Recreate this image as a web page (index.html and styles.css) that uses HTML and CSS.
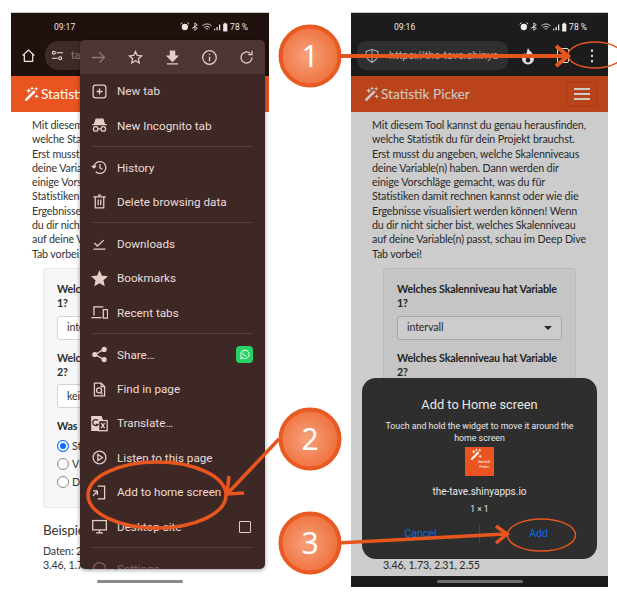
FILE: index.html
```
<!DOCTYPE html>
<html lang="de">
<head>
<meta charset="utf-8">
<title>Statistik Picker</title>
<link rel="stylesheet" href="styles.css">
</head>
<body>
<svg class="defs" width="0" height="0" aria-hidden="true">
  <defs>
    <radialGradient id="disc" cx="0.45" cy="0.5" r="0.6">
      <stop offset="0" stop-color="#f6a27c"/>
      <stop offset="1" stop-color="#ee6a35"/>
    </radialGradient>
    <g id="wand" fill="currentColor" stroke="none">
      <path d="M1.500 13.500 10.500 4.500l2 2-9 9a1.400 1.400 0 0 1-2-2Z"/>
      <path d="M5 2 5.800 4.200 8 5 5.800 5.800 5 8 4.200 5.800 2 5 4.200 4.200ZM13 .5 13.600 2.400 15.500 3 13.600 3.600 13 5.500 12.400 3.600 10.500 3 12.400 2.400ZM13.500 8.500 14.200 10.300 16 11 14.200 11.700 13.500 13.500 12.800 11.700 11 11 12.800 10.300ZM8.500 .5 9.100 1.900 10.500 2.500 9.100 3.100 8.500 4.500 7.900 3.100 6.500 2.500 7.900 1.900Z"/>
    </g>
    <g id="status" fill="currentColor" stroke="none">
      <circle cx="6" cy="6" r="3.800"/><path d="M1 2.500 3 .8M11 2.500 9 .8" stroke="currentColor" stroke-width="1.200"/>
      <path d="M18 1v9l3-2.500-3-2-3 2 3-2 3-2Z" fill="none" stroke="currentColor"/>
      <path d="M27 4.500a8 8 0 0 1 11 0M29 6.500a5.500 5.500 0 0 1 7 0M31 8.500a2.500 2.500 0 0 1 3 0" fill="none" stroke="currentColor"/>
      <path d="M41 8h1.500v2H41ZM44 6h1.500v4H44ZM47 3h1.500v7H47Z"/>
      <path d="M52 2h1.500V1h2v1H57v9.500h-5Z"/>
    </g>
  </defs>
</svg>

<main class="stage">

  <section class="phone phone-menu">
    <header class="chrome">
      <div class="status"><span class="time">09:17</span><span class="status-right"><svg class="status-icons" viewBox="0 0 58 12"><use href="#status"/></svg><span>78 %</span></span></div>
      <div class="toolbar toolbar-menu">
        <svg class="home" viewBox="0 0 18 18" fill="none" stroke="currentColor" stroke-width="1.500"><path d="M2 9 9 2.500 16 9M4 8v8h10V8"/></svg>
        <div class="pill pill-short">
          <svg class="tune" viewBox="0 0 14 12" fill="none" stroke="currentColor" stroke-width="1.200"><circle cx="3" cy="3" r="1.600"/><path d="M6 3h7M1 9h6"/><circle cx="10" cy="9" r="1.600"/></svg>
          <span class="url">tav</span>
        </div>
      </div>
    </header>
    <nav class="nav nav-menu">
      <svg class="wand" viewBox="0 0 16 16"><use href="#wand"/></svg><span class="brand">Statistik Picker</span>
    </nav>
    <div class="content">
      <p class="intro">Mit diesem Tool kannst du genau herausfinden, welche Statistik du für dein Projekt brauchst. Erst musst du angeben, welche Skalenniveaus deine Variable(n) haben. Dann werden dir einige Vorschläge gemacht, was du für Statistiken damit rechnen kannst oder wie die Ergebnisse visualisiert werden können! Wenn du dir nicht sicher bist, welches Skalenniveau auf deine Variable(n) passt, schau im Deep Dive Tab vorbei!</p>
      <div class="card">
        <div class="label">Welches Skalenniveau hat Variable 1?</div>
        <div class="select"><span>intervall</span><i class="caret"></i></div>
        <div class="label">Welches Skalenniveau hat Variable 2?</div>
        <div class="select"><span>keine</span><i class="caret"></i></div>
        <div class="label label-was">Was möchtest du sehen?</div>
        <div class="radio on"><i></i><span>Statistik</span></div>
        <div class="radio"><i></i><span>Visualisierung</span></div>
        <div class="radio"><i></i><span>Daten</span></div>
      </div>
      <h2 class="example">Beispieldaten</h2>
      <p class="data">Daten: 2.31, 2.55, 1.73,<br>3.46, 1.73, 2.31, 2.55</p>
    </div>
    <div class="home-bar home-bar-light"><i></i></div>

    <div class="menu">
      <div class="menu-tools">
        <svg viewBox="0 0 20 20" class="dim"><path d="M2 10h15M11 4l6 6-6 6"/></svg>
        <svg viewBox="0 0 20 20"><path d="M10 3l2.100 4.600 5 .5-3.700 3.400 1 4.900-4.400-2.500-4.400 2.500 1-4.900L2.900 8.100l5-.5Z"/></svg>
        <svg viewBox="0 0 20 20"><path class="solid" d="M7.500 2.500h5v6H16l-6 6-6-6h3.500Z"/><path d="M3.500 17.500h13"/></svg>
        <svg viewBox="0 0 20 20"><circle cx="10" cy="10" r="8"/><path d="M10 9v5.500M10 5.500v1.500"/></svg>
        <svg viewBox="0 0 20 20"><path d="M16.500 10a6.500 6.500 0 1 1-2-4.700M16.500 2v4.500H12"/></svg>
      </div>
      <ul class="menu-list">
        <li><svg viewBox="0 0 20 20"><rect x="2.500" y="2.500" width="15" height="15" rx="3"/><path d="M10 6.500v7M6.500 10h7"/></svg>New tab</li>
        <li><svg viewBox="0 0 20 20"><path class="solid" d="M6 2.500h8l1.500 5h-11Z"/><path d="M1.500 9h17"/><circle cx="5.500" cy="14" r="2.700"/><circle cx="14.500" cy="14" r="2.700"/><path d="M8.200 14h3.600"/></svg>New Incognito tab</li>
        <li class="sep"></li>
        <li><svg viewBox="0 0 20 20"><path d="M3.500 10a7 7 0 1 1 2.100 5M1 8l2.500 2.500L6 8M10.500 6v4.500l3 1.500"/></svg>History</li>
        <li><svg viewBox="0 0 20 20"><path d="M2.500 4.500h15M5 4.500h10v13H5ZM8 2.500h4M8.500 7.500v7M11.500 7.500v7"/></svg>Delete browsing data</li>
        <li class="sep"></li>
        <li><svg viewBox="0 0 20 20"><path d="M4 9.500l3.500 3.500L15 6M3 16.500h14"/></svg>Downloads</li>
        <li><svg viewBox="0 0 20 20"><path class="solid" d="M10 2l2.400 5.300 5.800.6-4.300 3.900 1.200 5.700-5.100-2.900-5.100 2.900 1.200-5.700L1.800 7.900l5.800-.6Z"/></svg>Bookmarks</li>
        <li><svg viewBox="0 0 20 20" class="wide"><path d="M3.500 13.500V3.500h11M.500 16h12M14.500 6.500h5v10h-5Z"/></svg>Recent tabs</li>
        <li class="sep"></li>
        <li><svg viewBox="0 0 20 20"><path d="M15 4 5 10l10 6"/><circle class="solid" cx="15.500" cy="4" r="2.300"/><circle class="solid" cx="4.500" cy="10" r="2.300"/><circle class="solid" cx="15.500" cy="16" r="2.300"/></svg>Share…<span class="whatsapp"><svg viewBox="0 0 20 20"><path d="M4 16.500l1-3.500a6.500 6.500 0 1 1 2.500 2.500ZM7.500 7c0 3 2.500 5.500 5.500 5.500"/></svg></span></li>
        <li><svg viewBox="0 0 20 20"><path d="M4 2.500h8l4 4v11H4ZM12 2.500v4h4"/><circle cx="9.500" cy="11" r="3"/><path d="M11.500 13.500l2 2"/></svg>Find in page</li>
        <li><svg viewBox="0 0 20 20"><path class="solid" d="M1 2h11l5 16H1Z"/><rect x="9" y="6.500" width="10" height="12" fill="#3e2826"/><path d="M12 9.500l4 6M16 9.500l-4 6"/><path class="translate-mark" d="M8 6.500A3.500 3.500 0 1 0 8.500 11H5.500"/></svg>Translate…</li>
        <li><svg viewBox="0 0 20 20"><circle cx="10" cy="10" r="7.500"/><path d="M8 6.500l5.500 3.500L8 13.500Z"/></svg>Listen to this page</li>
        <li><svg viewBox="0 0 20 20"><path d="M8 2.500h8v15H8M2.500 8h5M7.500 8v5M7.500 8l-5 6"/></svg>Add to home screen</li>
        <li><svg viewBox="0 0 20 20"><rect x="2" y="3" width="16" height="11"/><path d="M10 14v3M6 17.500h8"/></svg>Desktop site<span class="check"></span></li>
        <li class="sep"></li>
        <li class="faded"><svg viewBox="0 0 20 20"><circle cx="10" cy="10" r="7"/></svg>Settings</li>
      </ul>
    </div>
  </section>

  <section class="phone phone-dialog">
    <header class="chrome chrome-grey">
      <div class="status"><span class="time">09:16</span><span class="status-right"><svg class="status-icons" viewBox="0 0 58 12"><use href="#status"/></svg><span>78 %</span></span></div>
      <div class="toolbar">
        <div class="pill pill-long">
          <svg class="shield" viewBox="0 0 16 16" fill="none" stroke="currentColor" stroke-width="1.100"><path d="M8 1.500 14 3.500c0 5-1.500 9-6 11-4.500-2-6-6-6-11ZM8 1.500v13M2.500 7.500h11"/></svg>
          <span class="url">https://the-tave.shinya</span>
        </div>
        <svg class="flame" viewBox="0 0 14 18"><path d="M7 1c1 3 6 5 6 10.500a6 6 0 0 1-12 0c0-2.500 1-4 2.500-5.500.3 1.500.8 2 1.300 2C6 6 6 3 7 1Z" fill="currentColor"/><path d="M7 9c1 1.500 2.300 2.500 2.300 4.300a2.300 2.300 0 0 1-4.600 0C4.700 11.500 6 10.500 7 9Z" fill="#1c1c1c"/></svg>
        <span class="tabs"></span>
        <svg class="dots" viewBox="0 0 4 16"><circle cx="2" cy="2" r="1.300"/><circle cx="2" cy="8" r="1.300"/><circle cx="2" cy="14" r="1.300"/></svg>
      </div>
    </header>
    <nav class="nav">
      <svg class="wand" viewBox="0 0 16 16"><use href="#wand"/></svg><span class="brand">Statistik Picker</span>
      <span class="burger"><i></i><i></i><i></i></span>
    </nav>
    <div class="content">
      <p class="intro">Mit diesem Tool kannst du genau herausfinden, welche Statistik du für dein Projekt brauchst. Erst musst du angeben, welche Skalenniveaus deine Variable(n) haben. Dann werden dir einige Vorschläge gemacht, was du für Statistiken damit rechnen kannst oder wie die Ergebnisse visualisiert werden können! Wenn du dir nicht sicher bist, welches Skalenniveau auf deine Variable(n) passt, schau im Deep Dive Tab vorbei!</p>
      <div class="card">
        <div class="label">Welches Skalenniveau hat Variable 1?</div>
        <div class="select"><span>intervall</span><i class="caret"></i></div>
        <div class="label">Welches Skalenniveau hat Variable 2?</div>
        <div class="select"><span>keine</span><i class="caret"></i></div>
        <div class="label label-was">Was möchtest du sehen?</div>
        <div class="radio on"><i></i><span>Statistik</span></div>
        <div class="radio"><i></i><span>Visualisierung</span></div>
        <div class="radio"><i></i><span>Daten</span></div>
      </div>
      <h2 class="example">Beispieldaten</h2>
      <p class="data">Daten: 2.31, 2.55, 1.73,<br>3.46, 1.73, 2.31, 2.55</p>
    </div>
    <div class="home-bar"><i></i></div>
    <div class="scrim"></div>

    <div class="dialog">
      <h3 class="dialog-title">Add to Home screen</h3>
      <p class="dialog-hint">Touch and hold the widget to move it around the home screen</p>
      <div class="widget">
        <svg class="widget-wand" viewBox="0 0 16 16"><use href="#wand"/></svg>
        <span>Statistik<br>Picker</span>
      </div>
      <div class="dialog-domain">the-tave.shinyapps.io</div>
      <div class="dialog-size">1 × 1</div>
      <div class="dialog-actions"><span>Cancel</span><i class="divider"></i><span>Add</span></div>
    </div>
  </section>

  <svg class="notes" viewBox="0 0 617 596" width="617" height="596">
    <g class="note-lines">
      <ellipse cx="595" cy="55" rx="27" ry="13" class="thin"/>
      <path d="M338 56H566M556 46l12 10-12 10" class="bold"/>
      <ellipse cx="157" cy="495" rx="69" ry="33" class="oval"/>
      <path d="M279 439 228 493M229 476l-2 18 17-1" class="mid"/>
      <ellipse cx="541.500" cy="535" rx="34" ry="16" class="thin"/>
      <path d="M338 543 505 534M496 526l11 8-11 9" class="mid"/>
    </g>
    <g class="discs">
      <circle cx="310" cy="56" r="29.500"/>
      <circle cx="310" cy="439" r="29.500"/>
      <circle cx="310" cy="543" r="29.500"/>
    </g>
    <g class="disc-nums">
      <text x="310" y="67">1</text>
      <text x="310" y="450">2</text>
      <text x="310" y="554">3</text>
    </g>
  </svg>
</main>
</body>
</html>
```
FILE: styles.css
```
* { box-sizing: border-box; }

html, body { margin: 0; padding: 0; background: #fff; }

body {
  width: 617px;
  height: 596px;
  overflow: hidden;
  font-family: Lato, "Liberation Sans", sans-serif;
}

.defs { position: absolute; }

.stage {
  position: relative;
  width: 617px;
  height: 596px;
  padding: 13px 9px 0 11px;
  display: flex;
  justify-content: space-between;
}

.phone {
  position: relative;
  width: 258px;
  height: 574px;
  display: flex;
  flex-direction: column;
  overflow: hidden;
  background: #fff;
  color: #343434;
  box-shadow: 0 -1px 0 #c8c8c8;
}

.phone-dialog { width: 257px; }

/* browser chrome */
.chrome {
  height: 63px;
  flex: none;
  background: #20100e;
  color: #efe4e1;
}

.chrome-grey { background: #1c1c1c; color: #eee; }

.status {
  height: 28px;
  display: flex;
  align-items: center;
  justify-content: space-between;
  padding: 0 21px 0 43px;
  font-family: Roboto, sans-serif;
  font-size: 8.500px;
}

.status-right { display: flex; align-items: center; gap: 1px; }

.status-icons { width: 50px; height: 10px; }

.toolbar {
  height: 29px;
  display: flex;
  align-items: center;
  padding: 0 6px;
}

.toolbar-menu { padding-left: 10px; }

.home { width: 15px; height: 15px; margin-right: 9px; }

.pill {
  height: 29px;
  border-radius: 9px;
  display: flex;
  align-items: center;
  font-family: Roboto, sans-serif;
  font-size: 11px;
  overflow: hidden;
  white-space: nowrap;
}

.pill-short {
  width: 90px;
  border-radius: 14px;
  padding-left: 6px;
  background: #3f2a28;
  color: #8d7c79;
}

.pill-long {
  width: 151px;
  padding-left: 7px;
  background: #2f2f2f;
  color: #aaa;
}

.tune { width: 13px; height: 11px; margin-right: 7px; color: #efe4e1; }

.shield { width: 16px; height: 16px; margin-right: 9px; }

.flame { width: 14px; height: 18px; margin-left: 13px; color: #ddd; }

.tabs {
  width: 12px;
  height: 15px;
  margin-left: 22px;
  border: 1.500px solid #ddd;
  border-radius: 2px;
}

.dots { width: 4px; height: 14px; margin-left: 21px; fill: #eee; }

/* navbar */
.nav {
  height: 36px;
  flex: none;
  display: flex;
  align-items: center;
  padding: 0 11px 2px 13px;
  background: #e95420;
  color: #fff;
  font-size: 13.700px;
}

.wand { width: 15px; height: 15px; margin-right: 2px; }

.brand { flex: 1; white-space: nowrap; }

.burger {
  width: 31px;
  height: 25px;
  display: flex;
  flex-direction: column;
  justify-content: center;
  align-items: center;
  gap: 3.500px;
  border: 1px solid #d1481a;
  border-radius: 3px;
  margin-top: 2px;
}

.burger i { width: 16px; height: 1.500px; background: #fff; }

/* page content */
.content {
  flex: 1;
  min-height: 0;
  padding: 6px 21px 0;
  overflow: hidden;
  font-size: 10.700px;
  letter-spacing: -.14px;
  line-height: 14.300px;
}

.intro { margin: 0 0 7px; }

.card {
  height: 240px;
  margin: 0 11px;
  padding: 13px 13px 0;
  background: #f7f7f7;
  border: 1px solid #e8e8e8;
  border-radius: 3px;
}

.label { font-weight: 700; color: #2c2c2c; }

.select {
  height: 24px;
  margin: 5px 0 11px;
  padding: 0 9px;
  display: flex;
  align-items: center;
  justify-content: space-between;
  background: #fff;
  border: 1px solid #ced4da;
  border-radius: 3px;
}

.caret {
  width: 0;
  height: 0;
  border: 4px solid transparent;
  border-top-color: #333;
  border-bottom: 0;
}

.label-was { margin-bottom: 4px; }

.radio {
  height: 18px;
  display: flex;
  align-items: center;
  gap: 3px;
}

.radio i {
  width: 12px;
  height: 12px;
  border-radius: 50%;
  border: 1px solid #888;
  background: #fff;
}

.radio.on i {
  background: #0d6efd;
  box-shadow: inset 0 0 0 2px #fff;
  border-color: #0d6efd;
}

.example {
  margin: 13px 11px 5px;
  font-size: 13.500px;
  line-height: 18px;
  font-weight: 400;
}

.data { margin: 0 11px; }

.home-bar {
  height: 11px;
  flex: none;
  display: flex;
  align-items: center;
  justify-content: center;
  background: #222;
}

.home-bar i {
  width: 86px;
  height: 3px;
  border-radius: 2px;
  background: #8a8a8a;
}

.home-bar-light { background: #fff; }

/* overflow menu */
.menu {
  position: absolute;
  left: 69px;
  top: 27px;
  width: 185px;
  height: 529px;
  overflow: hidden;
  border-radius: 5px;
  background: #3e2826;
  box-shadow: 0 1px 4px rgba(0, 0, 0, .4);
  color: #ecdcd7;
  font-family: Roboto, sans-serif;
  font-size: 11.700px;
}

.menu svg {
  fill: none;
  stroke: #e6cfc8;
  stroke-width: 1.500;
}

.menu .solid { fill: #e6cfc8; }

.menu .translate-mark { stroke: #3e2826; }

.menu-tools {
  height: 34px;
  padding: 0 10px 0 10px;
  display: flex;
  align-items: center;
  justify-content: space-between;
  background: #4e3432;
}

.menu-tools svg { width: 17px; height: 17px; }

.menu-tools .dim { opacity: .45; }

.menu-list { margin: 0; padding: 0; list-style: none; }

.menu-list li {
  height: 34.400px;
  padding: 0 12px 0 11px;
  display: flex;
  align-items: center;
  white-space: nowrap;
}

.menu-list li > svg {
  width: 17px;
  height: 17px;
  flex: none;
  margin-right: 9px;
}

.menu-list .sep {
  height: 1px;
  margin: 3.300px 12px;
  padding: 0;
  background: #58403d;
}

.menu-list .faded { opacity: .35; }

.whatsapp {
  width: 17px;
  height: 17px;
  margin-left: auto;
  display: flex;
  align-items: center;
  justify-content: center;
  background: #25d366;
  border-radius: 4px;
}

.menu .whatsapp svg { width: 13px; height: 13px; stroke: #fff; }

.check {
  width: 12px;
  height: 12px;
  margin: 0 2px 0 auto;
  border: 1.500px solid #e6cfc8;
  border-radius: 1px;
}

/* scrim + dialog */
.scrim {
  position: absolute;
  inset: 63px 0 0;
  background: rgba(0, 0, 0, .2);
}

.dialog {
  position: absolute;
  left: 11px;
  top: 365px;
  width: 235px;
  height: 181px;
  padding: 18px 12px 0;
  border-radius: 14px;
  background: #2e2e2e;
  color: #e8e8e8;
  font-family: Roboto, sans-serif;
  text-align: center;
  display: flex;
  flex-direction: column;
  align-items: center;
}

.dialog-title {
  margin: 0;
  font-size: 12.800px;
  line-height: 18px;
  font-weight: 400;
}

.dialog-hint {
  margin: 6px 0 0;
  font-size: 8.800px;
  line-height: 12px;
}

.widget {
  width: 29px;
  height: 29px;
  margin-top: 3px;
  padding-left: 5px;
  background: #e95420;
  color: #fff;
  font-size: 3.500px;
  line-height: 5px;
  text-align: center;
  display: flex;
  flex-direction: column;
  align-items: flex-start;
}

.widget-wand { width: 12px; height: 12px; margin-top: 1px; }

.widget span { width: 100%; margin-left: 2px; }

.dialog-domain { margin-top: 8px; font-size: 10px; line-height: 16px; }

.dialog-size { margin-top: 2px; font-size: 8.500px; line-height: 14px; }

.dialog-actions {
  width: 235px;
  margin: 9px -12px 0;
  display: flex;
  align-items: center;
  color: #0b6be0;
  font-size: 10.500px;
  line-height: 16px;
}

.dialog-actions span { flex: 1; }

.divider { width: 1px; height: 18px; background: #444; }

/* annotations */
.notes { position: absolute; left: 0; top: 0; pointer-events: none; }

.note-lines { fill: none; stroke: #e8561f; stroke-width: 3; }

.note-lines .thin { stroke-width: 1.500; }

.note-lines .oval { stroke-width: 3.500; }

.note-lines .mid { stroke-width: 3.500; }

.note-lines .bold { stroke-width: 4; }

.discs { fill: url(#disc); stroke: #e95a22; stroke-width: 4; }

.disc-nums {
  fill: #fff;
  font-family: "Noto Sans", sans-serif;
  font-size: 30px;
  text-anchor: middle;
}
```
